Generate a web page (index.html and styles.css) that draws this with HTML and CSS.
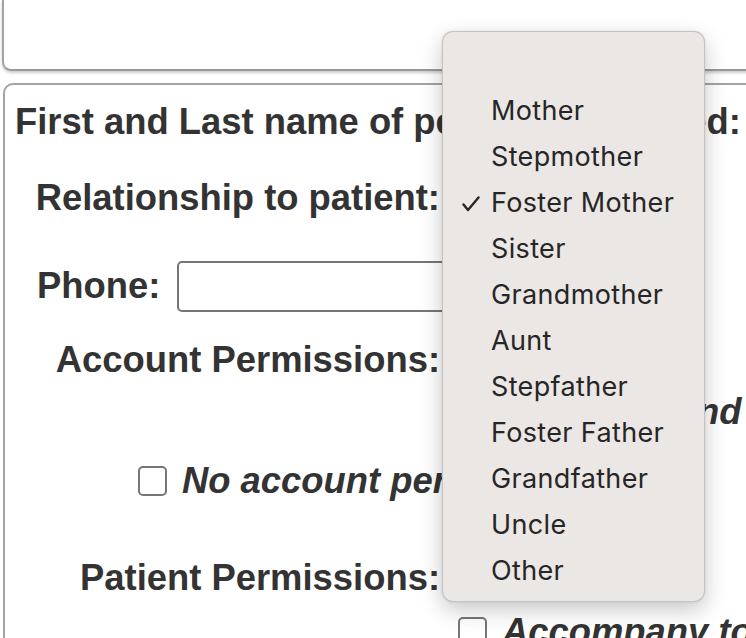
FILE: index.html
```html
<!DOCTYPE html>
<html lang="en">
<head>
<meta charset="utf-8">
<title>Authorized person</title>
<link rel="stylesheet" href="styles.css">
</head>
<body>
<div class="page">
  <div class="box box-top"></div>
  <div class="box box-main">
    <div class="row r1"><span class="lbl">First and Last name of person authorized:</span></div>
    <div class="row r2"><span class="lbl lbl-right">Relationship to patient:</span><div class="select">Foster Mother</div></div>
    <div class="row r3"><span class="lbl">Phone:</span><div class="input"></div></div>
    <div class="row r4"><span class="lbl lbl-right">Account Permissions:</span></div>
    <div class="row r5"><span class="lbl ital">View and</span></div>
    <div class="row r6"><span class="check"></span><span class="lbl ital">No account permissions</span></div>
    <div class="row r7"><span class="lbl lbl-right">Patient Permissions:</span></div>
    <div class="row r8"><span class="check"></span><span class="lbl ital">Accompany to</span></div>
  </div>
  <div class="popup">
    <div class="opt">Mother</div>
    <div class="opt">Stepmother</div>
    <div class="opt selected"><svg class="tick" width="18" height="16" viewBox="0 0 18 16"><polyline points="1.5,8.5 6,14 16.5,1.5" fill="none" stroke="#262626" stroke-width="2.4" stroke-linecap="round" stroke-linejoin="round"/></svg>Foster Mother</div>
    <div class="opt">Sister</div>
    <div class="opt">Grandmother</div>
    <div class="opt">Aunt</div>
    <div class="opt">Stepfather</div>
    <div class="opt">Foster Father</div>
    <div class="opt">Grandfather</div>
    <div class="opt">Uncle</div>
    <div class="opt">Other</div>
  </div>
</div>
</body>
</html>
```
FILE: styles.css
```css
html, body {
  margin: 0;
  padding: 0;
  background: #ffffff;
}
.page {
  position: relative;
  width: 746px;
  height: 638px;
  overflow: hidden;
  font-family: "Liberation Sans", Arial, Helvetica, sans-serif;
  color: #333333;
}
.box {
  width: 1000px;
  border: 2px solid #a3a3a3;
  background: #fff;
}
.box-top {
  height: 69px;
  margin-left: 2px;
  border-top: none;
  border-bottom-color: #999999;
  border-radius: 0 0 0 9px;
  box-shadow: 0 2px 3px rgba(0, 0, 0, 0.2);
}
.box-main {
  margin-top: 12px;
  margin-left: 3px;
  height: 700px;
  border-radius: 10px 0 0 0;
  padding-top: 16px;
  display: flex;
  flex-direction: column;
}
.row {
  display: flex;
  align-items: center;
  height: 42px;
}
.lbl {
  font-size: 36.4px;
  font-weight: bold;
  line-height: 42px;
  white-space: nowrap;
}
.lbl-right {
  width: 435px;
  text-align: right;
  flex: none;
}
.ital {
  font-style: italic;
}
.r1 { padding-left: 10px; }
.r2 { margin-top: 34px; }
.r3 { margin-top: 41px; height: 52px; padding-left: 32px; }
.r4 { margin-top: 27px; }
.r5 { margin-top: 10px; padding-left: 580px; }
.r6 { margin-top: 27px; padding-left: 133px; }
.r7 { margin-top: 55px; }
.r8 { margin-top: 12px; padding-left: 453px; }
.select {
  margin-left: 20px;
  font-size: 26px;
  color: #333;
}
.input {
  margin-left: 17px;
  width: 380px;
  height: 51px;
  border: 2px solid #767676;
  border-radius: 5px;
  box-sizing: border-box;
}
.check {
  flex: none;
  width: 29px;
  height: 30px;
  box-sizing: border-box;
  border: 2px solid #767676;
  border-radius: 5px;
  margin-right: 15px;
  background: #fff;
}
.popup {
  position: absolute;
  left: 442px;
  top: 31px;
  width: 263px;
  height: 571px;
  box-sizing: border-box;
  padding-top: 56px;
  background: #ebe7e5;
  border: 1px solid rgba(0, 0, 0, 0.16);
  border-radius: 11px;
  box-shadow: 0 8px 22px rgba(0, 0, 0, 0.22), 0 0 3px rgba(0, 0, 0, 0.08);
  font-family: Inter, "Noto Sans", sans-serif;
  font-size: 27px;
  letter-spacing: 0.35px;
  color: #262626;
}
.opt {
  position: relative;
  height: 46px;
  line-height: 46px;
  padding-left: 48px;
  white-space: nowrap;
}
.tick {
  position: absolute;
  left: 19px;
  top: 16px;
}
```
